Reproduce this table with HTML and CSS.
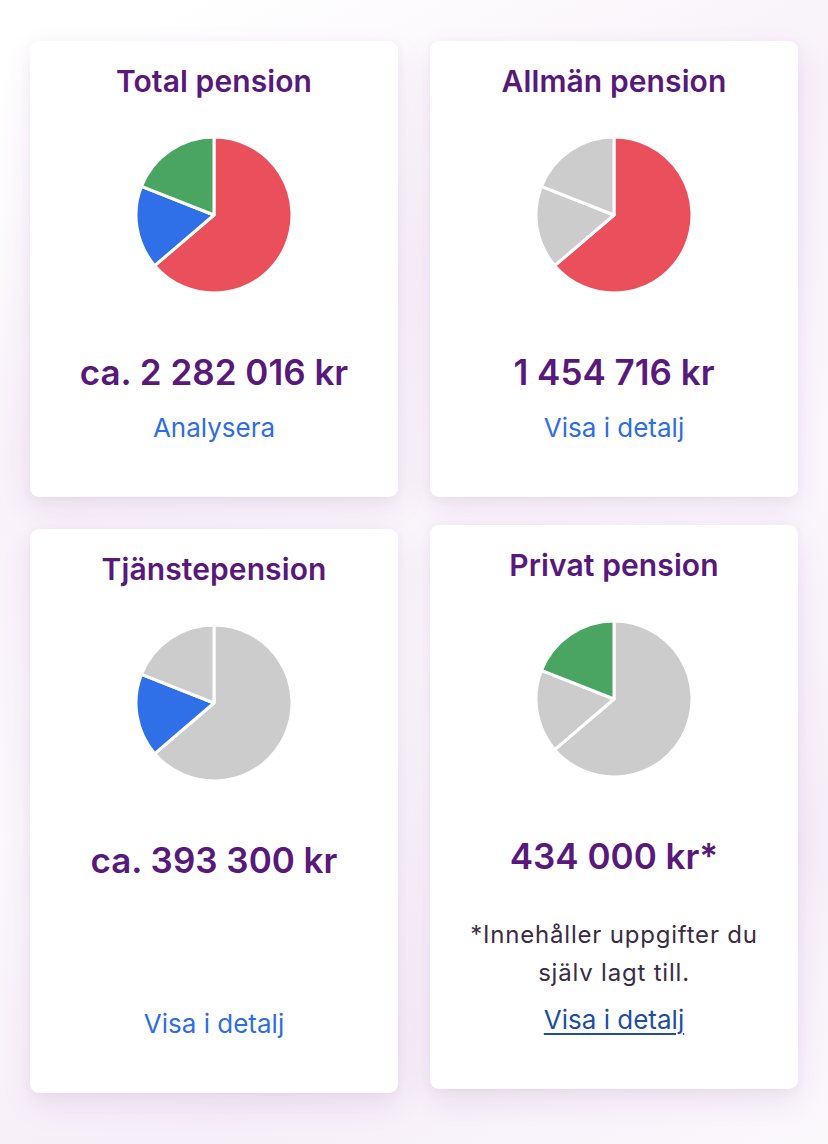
FILE: index.html
```html
<!DOCTYPE html>
<html lang="sv">
<head>
<meta charset="utf-8">
<title>Pension</title>
<link rel="stylesheet" href="styles.css">
</head>
<body>
<main class="grid">
  <section class="card">
    <h2 class="title">Total pension</h2>
    <svg class="pie" viewBox="0 0 160 160" width="160" height="160">
      <path class="red" d="M80 80 L80 2 A78 78 0 1 1 20.70 130.66 Z"/>
      <path class="blue" d="M80 80 L20.70 130.66 A78 78 0 0 1 7.44 51.37 Z"/>
      <path class="green" d="M80 80 L7.44 51.37 A78 78 0 0 1 80 2 Z"/>
    </svg>
    <p class="amount">ca. 2 282 016 kr</p>
    <a class="link" href="#">Analysera</a>
  </section>
  <section class="card">
    <h2 class="title">Allmän pension</h2>
    <svg class="pie" viewBox="0 0 160 160" width="160" height="160">
      <path class="red" d="M80 80 L80 2 A78 78 0 1 1 20.70 130.66 Z"/>
      <path class="gray" d="M80 80 L20.70 130.66 A78 78 0 0 1 7.44 51.37 Z"/>
      <path class="gray" d="M80 80 L7.44 51.37 A78 78 0 0 1 80 2 Z"/>
    </svg>
    <p class="amount">1 454 716 kr</p>
    <a class="link" href="#">Visa i detalj</a>
  </section>
  <section class="card card-shift">
    <h2 class="title">Tjänstepension</h2>
    <svg class="pie" viewBox="0 0 160 160" width="160" height="160">
      <path class="gray" d="M80 80 L80 2 A78 78 0 1 1 20.70 130.66 Z"/>
      <path class="blue" d="M80 80 L20.70 130.66 A78 78 0 0 1 7.44 51.37 Z"/>
      <path class="gray" d="M80 80 L7.44 51.37 A78 78 0 0 1 80 2 Z"/>
    </svg>
    <p class="amount">ca. 393 300 kr</p>
    <a class="link" href="#">Visa i detalj</a>
  </section>
  <section class="card">
    <h2 class="title">Privat pension</h2>
    <svg class="pie" viewBox="0 0 160 160" width="160" height="160">
      <path class="gray" d="M80 80 L80 2 A78 78 0 1 1 20.70 130.66 Z"/>
      <path class="gray" d="M80 80 L20.70 130.66 A78 78 0 0 1 7.44 51.37 Z"/>
      <path class="green" d="M80 80 L7.44 51.37 A78 78 0 0 1 80 2 Z"/>
    </svg>
    <p class="amount">434 000 kr*</p>
    <p class="note">*Innehåller uppgifter du själv lagt till.</p>
    <a class="link link-visited" href="#">Visa i detalj</a>
  </section>
</main>
</body>
</html>
```
FILE: styles.css
```css
* { box-sizing: border-box; }

html, body {
  margin: 0;
  padding: 0;
}

body {
  width: 828px;
  min-height: 1144px;
  font-family: Inter, "Noto Sans", "Liberation Sans", sans-serif;
  background:
    linear-gradient(155deg, #ffffff 0%, #ffffff 6%, #f8f1f9 30%, #fbf7fc 55%, #f6eef8 80%, #fbf8fc 100%);
}

.grid {
  display: grid;
  grid-template-columns: 368px 368px;
  column-gap: 32px;
  row-gap: 28px;
  padding: 41px 30px 40px;
}

.card {
  display: flex;
  flex-direction: column;
  align-items: center;
  background: #ffffff;
  border-radius: 9px;
  padding: 22px 16px 53px;
  box-shadow: 0 12px 30px rgba(120, 50, 150, 0.10), 0 2px 10px rgba(120, 50, 150, 0.05);
}

.card-shift {
  margin-top: 4px;
  margin-bottom: -4px;
}

.title {
  margin: 0;
  font-size: 30px;
  line-height: 36px;
  font-weight: 600;
  color: #58197a;
  letter-spacing: 0.1px;
}

.pie {
  display: block;
  margin-top: 36px;
}

.pie path {
  stroke: #ffffff;
  stroke-width: 3;
  stroke-linejoin: round;
}

.red { fill: #e9505b; }
.blue { fill: #2f6fe7; }
.green { fill: #4ba562; }
.gray { fill: #cccccc; }

.amount {
  margin: 56px 0 19px;
  font-size: 35px;
  line-height: 42px;
  font-weight: 600;
  color: #58197a;
}

.note {
  margin: 20px 0 12px;
  font-size: 24px;
  line-height: 38px;
  letter-spacing: 0.8px;
  color: #3b2b45;
  text-align: center;
  width: 320px;
}

.link {
  margin-top: auto;
  font-size: 26px;
  line-height: 32px;
  color: #2e6de6;
  text-decoration: none;
}

.link-visited {
  color: #1e4f9f;
  text-decoration: underline;
  text-decoration-thickness: 2px;
  text-underline-offset: 4px;
}
```
